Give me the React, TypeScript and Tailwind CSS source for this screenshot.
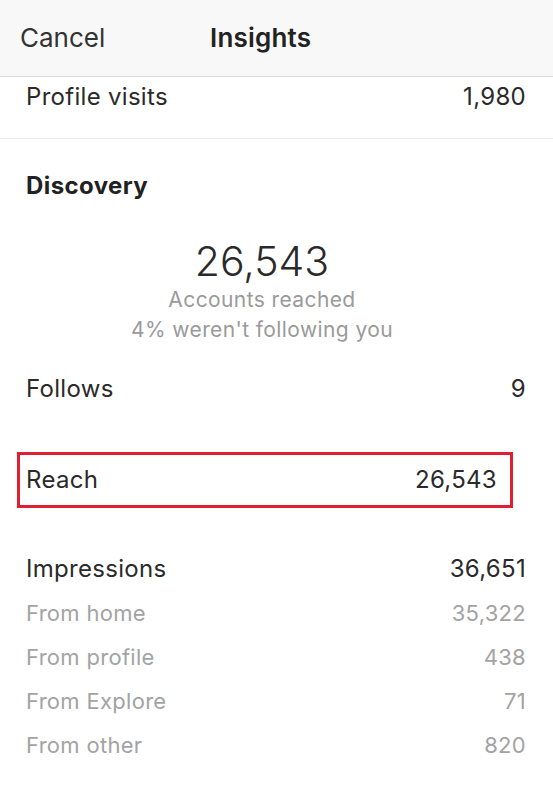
export default function App() {
  const subRows = [
    { label: "From home", value: "35,322" },
    { label: "From profile", value: "438" },
    { label: "From Explore", value: "71" },
    { label: "From other", value: "820" },
  ];

  return (
    <div
      className="w-[553px] h-[800px] bg-white text-[#2a2a2a] overflow-hidden"
      style={{ fontFamily: "Inter, 'Liberation Sans', sans-serif" }}
    >
      {/* header */}
      <div className="h-[77px] flex items-center px-5 bg-[#f8f8f8] border-b border-[#dadada]">
        <span className="text-[26px] leading-none text-[#333] w-[190px]">Cancel</span>
        <span className="text-[26px] leading-none font-semibold text-[#222] tracking-[0.2px]">Insights</span>
      </div>

      {/* profile visits */}
      <div className="h-[62px] pt-[6px] border-b border-[#ececec]">
        <div className="flex justify-between pl-[26px] pr-[27px] text-[24px] leading-[28px] tracking-[0.3px]">
          <span>Profile visits</span>
          <span>1,980</span>
        </div>
      </div>

      {/* discovery */}
      <div className="pt-[33px]">
        <h2 className="pl-[26px] text-[24px] leading-[28px] font-bold text-[#222] tracking-[0.4px]">Discovery</h2>

        <div className="mt-[37px] pr-[29px] flex flex-col items-center">
          <span className="text-[41px] leading-[48px] font-light">26,543</span>
          <span className="text-[21px] leading-[30px] text-[#9a9a9a] tracking-[0.4px]">Accounts reached</span>
          <span className="text-[21px] leading-[30px] text-[#9a9a9a] tracking-[0.4px]">4% weren't following you</span>
        </div>

        <div className="mt-[30px] flex justify-between pl-[26px] pr-[27px] text-[24px] leading-[28px] tracking-[0.3px]">
          <span>Follows</span>
          <span>9</span>
        </div>

        <div className="mt-[49px] ml-[17px] w-[496px] h-[56px] border-[3px] border-[#e0202e] flex items-center justify-between pl-[6px] pr-[13px] text-[24px] tracking-[0.3px]">
          <span>Reach</span>
          <span>26,543</span>
        </div>

        <div className="mt-[47px] flex justify-between pl-[26px] pr-[27px] text-[24px] leading-[28px] tracking-[0.3px]">
          <span>Impressions</span>
          <span>36,651</span>
        </div>

        <div className="mt-[8px]">
          {subRows.map((r) => (
            <div
              key={r.label}
              className="h-[44px] flex items-center justify-between pl-[26px] pr-[27px] text-[22px] text-[#a3a3a3] tracking-[0.3px]"
            >
              <span>{r.label}</span>
              <span>{r.value}</span>
            </div>
          ))}
        </div>
      </div>
    </div>
  );
}
